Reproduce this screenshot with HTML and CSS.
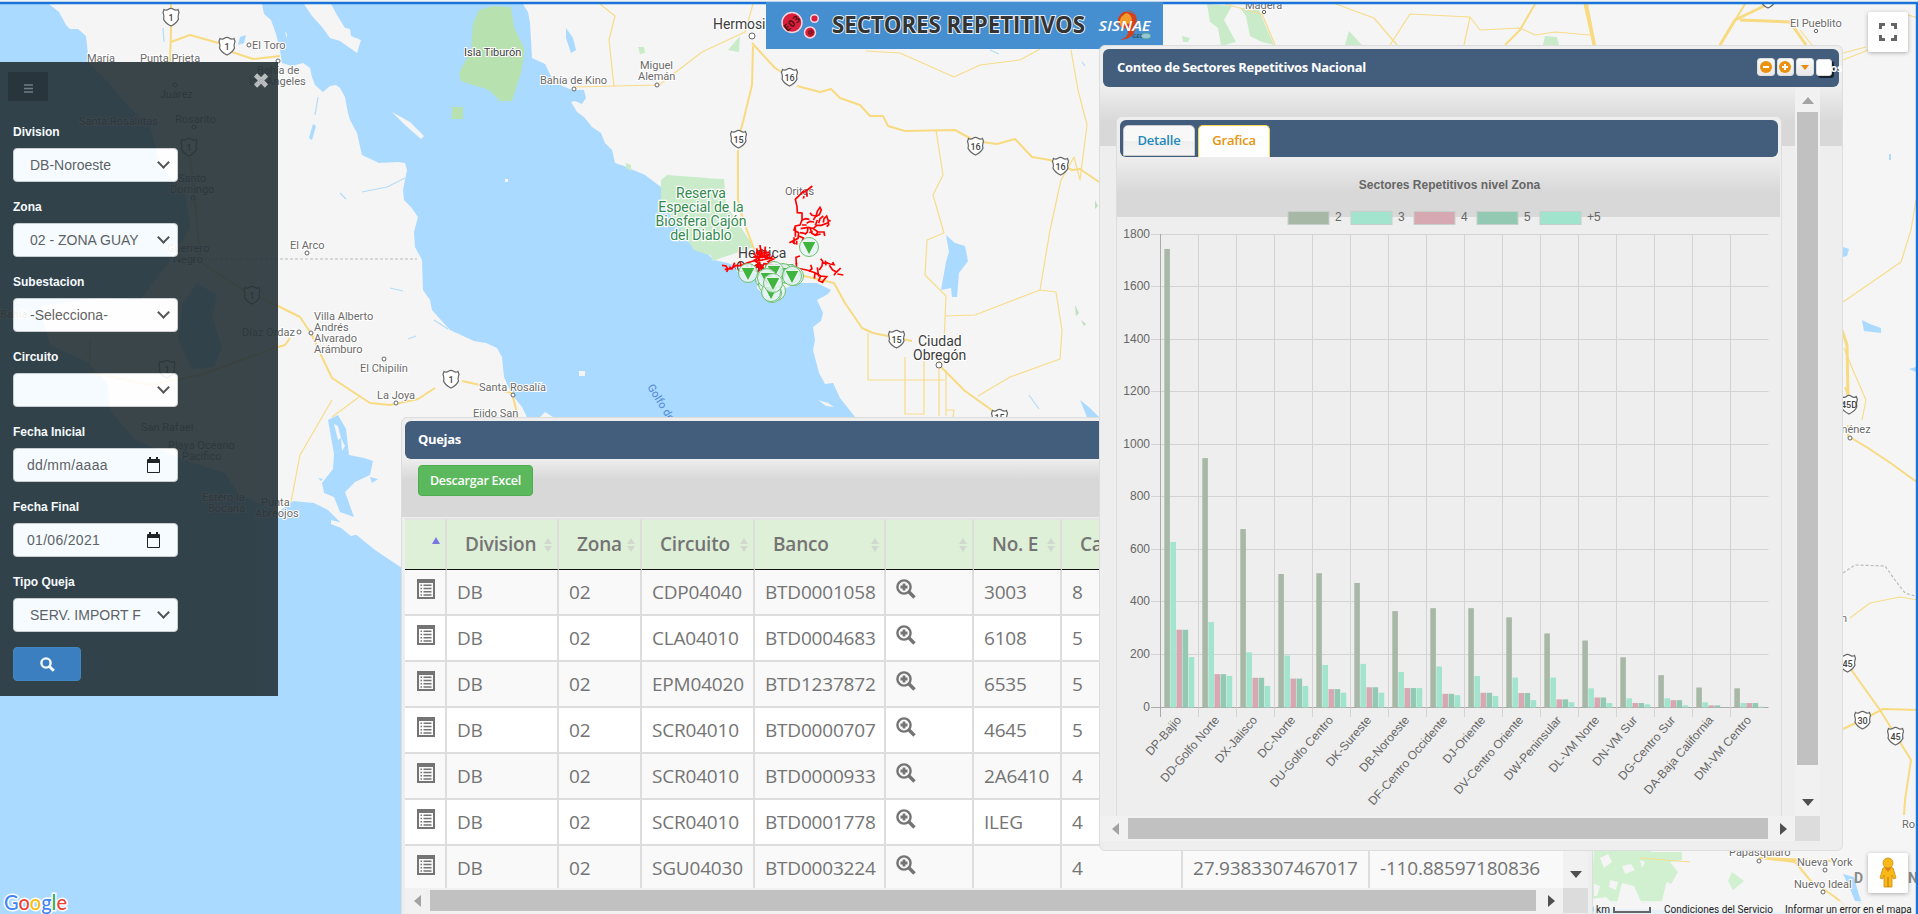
FILE: index.html
```html
<!DOCTYPE html>
<html lang="es">
<head>
<meta charset="utf-8">
<title>Sectores Repetitivos</title>
<link rel="stylesheet" href="styles.css">
</head>
<body>
<svg class="defs" width="0" height="0" aria-hidden="true">
  <symbol id="i-list" viewBox="0 0 18 20"><path fill="currentColor" fill-rule="evenodd" d="M0 0h18v20H0zM2 4v14h14V4zM3.500 5.500h1.500v1.500H3.500zM6.500 5.500h8v1.500h-8zM3.500 8.700h1.500v1.500H3.500zM6.500 8.700h8v1.500h-8zM3.500 12h1.500v1.500H3.500zM6.500 12h8v1.500h-8zM3.500 15.200h1.500v1.500H3.500zM6.500 15.200h8v1.500h-8z"/></symbol>
  <symbol id="i-zoom" viewBox="0 0 20 20"><g fill="none" stroke="currentColor"><circle cx="8" cy="8" r="6.600" stroke-width="2.400"/><path d="M8 4.500v7M4.500 8h7" stroke-width="2.800"/><path d="M12.800 12.800L18.500 18.500" stroke-width="3.400"/></g></symbol>
  <symbol id="shield" viewBox="0 0 18 20"><path d="M2 2.500Q4.500 4 6.500 2.300Q9 .5 11.500 2.300Q13.500 4 16 2.500L17 5.500Q15.500 9 16.500 12Q15 16 9 19Q3 16 1.500 12Q2.500 9 1 5.500Z" fill="#fff" stroke="#666" stroke-width="1.200"/></symbol>
</svg>

<main class="screen">
  <svg class="map" viewBox="0 0 1918 914" width="1918" height="914">
    <rect width="1918" height="914" fill="#aadaff"/>
    <g fill="#f5f5f5">
      <path d="M49 4L59 12L66 25L70 29L78 29L86 36L88 55L88 62L108 82L130 108L150 125L160 165L186 195L190 228L172 258L152 285L140 300L100 298L40 306L50 345L88 362L108 385L110 410L135 440L190 462L225 473L240 495L278 512L293 501L314 503L328 510L341 523L354 533L375 550L402 568L470 620L700 640L600 520L527 417L522 407L514 397L508 386L504 377L502 357L497 348L486 343L474 341L450 330L440 319L432 310L430 300L423 290L422 260L415 247L414 232L418 217L411 207L404 200L403 190L407 170L405 163L398 162L379 163L362 155L357 133L350 120L348 113L345 97L340 88L336 85L330 86L323 92L315 85L312 77L310 68L303 63L292 66L282 63L280 50L276 34L271 20L264 14L262 4Z"/>
      <path d="M304 4L312 16L322 27L330 38L340 41L357 53L361 40L351 36L350 29L345 28L337 15L331 4ZM392 112L410 122L424 136L421 139L405 125ZM523 4L528 12L530 23L531 40L532 58L545 64L552 78L560 85L572 90L584 90L586 98L582 104L575 101L571 102L577 112L584 117L592 127L601 133L605 143L612 150L615 163L624 166L645 175L661 187L661 200L670 215L679 227L697 244L714 260L728 263L742 270L754 271L758 277L757 288L762 293L775 300L781 297L786 288L797 283L817 283L831 290L828 294L817 300L823 313L821 321L813 327L815 340L813 350L819 373L825 384L833 383L840 398L855 417L900 520L1100 900L1918 914V4Z"/>
      <path d="M540 417l5-5 8 5zM579 371h6v5h-6zM818 400l10 3 6 4-8-1zM285 31l2 3v5zM505 179h3v3h-3z"/>
    </g>
    <path fill="#aadaff" d="M182 305l15-22 20 12-5 22 10 30-8 20-22 2-14-30zM328 420l10-5 8 14 3 26 15 3 9 3-3 14-15 7-10 10 9 25-14-5-6-15-10-4-2-10 11-14 1-15zM370 477l8 2-6 4zM318 478l5 1-2 2zM313 124l3 2-4 14-3-2zM566 28l7 10 3 12-5 3-5-15zM946 235l9 8 10 3 3 15-9 12-2 24-5 0-1-9-10 2 5-28 3-10zM240 37l6-2-2 8-6 2zM1080 400l10 8 9 9h-12z"/>
    <path fill="#f5f5f5" d="M334 424l4 2 3 12-3 2zM341 438l4 8-3 5zM331 520l16 4 12 10-8 2-10-8-10-4z"/>
    <path fill="#b7e2b0" d="M479 10L493 6L511 7L514 27L525 50L521 73L512 101L500 101L489 90L461 81L459 73L471 50L473 23ZM452 107h11v12h-11z"/>
    <path fill="#c9ebc9" d="M661 180L667 175L708 178L709 205L735 247L718 258L694 250L679 227L661 200ZM708 178h0zM728 50l12-14-1 16zM638 47l6 0 1 6-5 1zM1207 4l25 2-8 14 12 22-15 4-3-18-8-6zM1240 8l18-1 8 20 8 18-12-3-12-6-4-20zM1349 31l13 14h-17zM1545 36l12 1 2 8h-16zM626 163l5 2 0 6-5-3zM1182 36l8 2-2 4-5 0z"/>
    <path fill="#c9ebc9" d="M700 178L724 179L726 205L754 247L712 261Z"/>
    <path fill="#c9efc9" opacity=".85" d="M1594 850h55l12 8-10 13 16 8-5 22-20 3-8-18-12-3-6 24-10-10-15 2zM1652 852l30 0 0 8-12 2 8 10-7 12-12-6-10 8 2-18zM1732 872l12 9-11 9-5-9z"/>
    <path fill="#f5f5f5" d="M1600 858l8-4 4 8-8 6zM1622 866l9-2 4 6-10 4zM1610 880l8 2-2 8-7-3zM1640 860l5 2-3 6zM1594 884l6 2-3 10h-3z"/>
    <path fill="#aadaff" d="M1843 247l6 2-2 7-4 1zM1862 320l8 4 11 4 0 5-17-2zM1909 369l7-2v5zM1843 874l11 3 5 18 4 10-8-4-5-12zM1889 154h2v6h-2z"/>
    <g class="road thin">
      <path d="M600 4L615 16L609 40L614 87M574 87L659 85L702 52L745 32L753 4M866 51L900 53L954 77L980 65L1020 60L1040 49M1071 50L1078 90L1087 125L1080 180L1074 157L1061 180L1050 230L1040 290L975 315L945 316M936 130L943 175L933 195L944 233L927 240L925 275L946 296L944 343M868 333V380H945M905 357V414H924V357H960M939 360V416M946 370V416M946 410H954L953 417M1040 290L1056 292L1062 330L1060 359L1010 377L978 396M332 400L300 455L291 502M359 397L332 417"/>
      <path d="M1225 4L1262 14L1275 45M1336 4L1374 18L1397 45M1410 14L1390 45M1410 14L1470 17L1480 30L1520 28L1535 35L1555 32L1590 35M1470 17L1464 45M1843 53L1866 47M1838 62L1868 50M1918 18L1908 15M1843 302L1901 262L1911 230L1916 200M1844 348L1853 370L1866 400L1862 420M1850 618L1870 603L1900 597L1918 600M1640 858L1690 862M1800 30L1812 45"/>
    </g>
    <g class="road mid">
      <path d="M171 4V30L170 62M171 42L190 35L222 44M232 52L253 59L280 56M189 150L197 220L200 262L240 288L278 306L300 317L312 335L321 355L332 378L370 403L390 405L418 399L435 388M90 340V372L150 385L200 375L278 347M462 381L480 385L512 393L518 417M278 347L285 345L290 338M738 150V200L743 220L762 270L800 275L834 283L845 303L862 328L873 333L912 341M752 43L775 68L789 77M797 86L820 92L831 89L840 98L860 105L870 116L883 116L888 126L905 131L955 130L975 141L997 144L1015 139L1032 157L1050 160L1072 170L1080 169L1099 182M753 46L752 85L743 122L738 140M940 366L965 391L1000 416M1845 387L1848 395M1848 425V436L1868 448L1892 464L1918 483M1850 668L1880 710L1911 760L1905 800L1904 815M1843 729L1862 720L1883 709L1918 710M1587 4L1595 45M1535 4L1520 30L1505 45M1745 4L1720 45M1838 861L1760 858L1795 862L1810 880L1835 897L1850 910"/>
    </g>
    <g class="road wide"><path d="M1585 4L1594 45M1764 6L1735 20L1720 45M1740 20L1790 22L1806 45M1842 330L1847 345L1848 396"/></g>
    <path d="M200 259H417M1843 573L1855 565L1885 566L1895 580L1905 593L1918 597" fill="none" stroke="#bbb" stroke-width="1.200" stroke-dasharray="3 2"/>
    <g fill="none" stroke="#b4dcf8" stroke-width="1.200"><path d="M340 193l6 6M362 192l25-5 18-9M390 288l13 3M408 339l8-3M434 320l14 9M163 28l1 14M318 97l-3 18M1029 395l10 14M1082 62l3 4M990 50l9 4"/></g>
    <g fill="#bfe0bf"><path d="M1075 305l4 8-3 3zM1081 320l5 4-2 2zM1095 200l3 6-3 3z"/></g>

    <g class="shields">
      <use href="#shield" x="162" y="7" width="18" height="20"/><text x="171" y="21">1</text>
      <use href="#shield" x="218" y="36" width="18" height="20"/><text x="227" y="50">1</text>
      <use href="#shield" x="442" y="369" width="18" height="20"/><text x="451" y="383">1</text>
      <use href="#shield" x="180" y="137" width="18" height="20"/><text x="189" y="151">1</text>
      <use href="#shield" x="243" y="285" width="18" height="20"/><text x="252" y="299">1</text>
      <use href="#shield" x="158" y="359" width="18" height="20"/><text x="167" y="373">1</text>
      <use href="#shield" x="780" y="67" width="19" height="20"/><text x="789.500" y="81">16</text>
      <use href="#shield" x="966" y="136" width="19" height="20"/><text x="975.500" y="150">16</text>
      <use href="#shield" x="1051" y="156" width="19" height="20"/><text x="1060.500" y="170">16</text>
      <use href="#shield" x="729" y="129" width="19" height="20"/><text x="738.500" y="143">15</text>
      <use href="#shield" x="887" y="329" width="19" height="20"/><text x="896.500" y="343">15</text>
      <use href="#shield" x="990" y="408" width="19" height="20"/><text x="999.500" y="421">15</text>
      <use href="#shield" x="1837" y="394" width="24" height="21"/><text x="1849" y="408">45D</text>
      <use href="#shield" x="1838" y="653" width="19" height="20"/><text x="1847.500" y="667">45</text>
      <use href="#shield" x="1853" y="710" width="19" height="20"/><text x="1862.500" y="724">30</text>
      <use href="#shield" x="1886" y="726" width="19" height="20"/><text x="1895.500" y="740">45</text>
      <use href="#shield" x="1759" y="-11" width="18" height="20"/>
    </g>
    <g class="dots">
      <circle cx="249" cy="45" r="2"/><circle cx="278" cy="61" r="2"/><circle cx="307" cy="253" r="2"/><circle cx="299" cy="332" r="2"/><circle cx="311" cy="333" r="2"/><circle cx="384" cy="359" r="2"/><circle cx="396" cy="403" r="2"/><circle cx="513" cy="395" r="2"/><circle cx="574" cy="89" r="2"/><circle cx="657" cy="85" r="2"/><circle cx="752" cy="36" r="3"/><circle cx="939" cy="365" r="3"/><circle cx="1264" cy="12" r="1.700"/><circle cx="1816" cy="31" r="1.700"/><circle cx="1850" cy="438" r="2"/><circle cx="1759" cy="861" r="2"/><circle cx="1825" cy="870" r="2"/><circle cx="1823" cy="892" r="2"/>
      <circle cx="175" cy="85" r="2"/><circle cx="194" cy="127" r="2"/><circle cx="193" cy="198" r="2"/><circle cx="738" cy="267" r="3"/>
    </g>
    <g class="place">
      <text x="87" y="62">María</text><text x="140" y="62">Punta Prieta</text><text x="252" y="49">El Toro</text>
      <text x="257" y="74">Bahía de</text><text x="249" y="85">los Ángeles</text><text x="160" y="98">Juárez</text>
      <text x="79" y="125">Santa Rosaliitas</text><text x="175" y="123">Rosarito</text><text x="178" y="182">Santo</text><text x="170" y="193">Domingo</text>
      <text x="167" y="252">Guerrero</text><text x="173" y="263">Negro</text><text x="0" y="318">Bahía</text>
      <text x="290" y="249">El Arco</text><text x="242" y="336">Díaz Ordaz</text>
      <text x="314" y="320">Villa Alberto</text><text x="314" y="331">Andrés</text><text x="314" y="342">Alvarado</text><text x="314" y="353">Arámburo</text>
      <text x="360" y="372">El Chipilín</text><text x="377" y="399">La Joya</text><text x="479" y="391">Santa Rosalía</text><text x="473" y="417">Ejido San</text>
      <text x="141" y="431">San Rafael</text><text x="168" y="449">Playa Océano</text><text x="182" y="460">Pacífico</text>
      <text x="202" y="501">Estero la</text><text x="208" y="512">Bocana</text><text x="261" y="506">Punta</text><text x="255" y="517">Abreojos</text>
      <text x="540" y="84">Bahía de Kino</text><text x="640" y="69">Miguel</text><text x="638" y="80">Alemán</text><text x="785" y="195">Oritas</text>
      <text x="1245" y="9">Madera</text><text x="1790" y="27">El Pueblito</text><text x="1829" y="433">Jiménez</text><text x="1841" y="622">n</text>
      <text x="1902" y="828">Ro</text><text x="1729" y="856">Papasquiaro</text><text x="1797" y="866">Nueva York</text><text x="1794" y="888">Nuevo Ideal</text>
    </g>
    <g class="place city"><text x="464" y="56" class="isla">Isla Tiburón</text><text x="713" y="29" textLength="67">Hermosillo</text><text x="918" y="346">Ciudad</text><text x="913" y="360">Obregón</text><text x="738" y="258">Heroica</text><text x="736" y="272">Guaymas</text></g>
    <g class="park"><text x="701" y="198">Reserva</text><text x="701" y="212">Especial de la</text><text x="701" y="226">Biosfera Cajón</text><text x="701" y="240">del Diablo</text></g>
    <text class="sea" transform="translate(647 387) rotate(58)">Golfo de California</text>
    <g fill="#8a8a8a" font-family="Roboto, sans-serif" font-weight="700" font-size="14"><text x="1854" y="883">D</text><text x="1908" y="883">N</text></g>

    <!-- circuit network around Guaymas -->
    <g class="net" transform="translate(700 170) scale(.33333)">
      <path d="M337 48L322 60L304 70L286 88L291 110L292 128L306 129V150L300 165L286 168L282 180L296 188L294 205L268 218M304 70l8-8M318 66l4 14M312 78l-2 8M306 150l12-4 10 2M306 165l14 0M302 176l22-4 16 4 10-10 14 0 20-8M340 176l14 10 18 0 2 12M354 186l-8 10M340 150l8-12 4-14 8-12 4 8-6 14-12 6M348 138l-12-2-6-8M356 160l4-14 10-8M370 158l2-12 8-8 4 12 8 4M384 150l2 14-6 6M324 172l-2 14-8 8M330 174l6 16 10 6 16-4M300 188l14 2M296 198l14 6-4 10 10 6M290 212v12M282 202v20M276 214l10 8M286 172v28M338 184l-10 4M320 160l10-6 12 2M346 166l6-16"/>
      <path d="M290 300L288 262L300 258M286 282l6-2M290 294L320 300L345 308L362 318L380 320L365 338M332 284l4 12-10 8M345 308l-2 18M358 300l8-12 2-14-6-8M366 280l14-2 10 4 12 2-4-8M376 272l2 14M388 286l10 14 12 6 8-8 4-4M408 306l-6 10M412 312l18 3M362 318l-6 14 14 6M352 292l4 28"/>
      <path d="M66 286l12 2 6 10-4 8M74 298l20-2 14-10 14 2 20-10 16-4 12-8M104 278l-6 14M120 276l6 18M88 290l10 8M160 250l14 14-10 8 14 10-10 12M170 235l4 16 12-14-4 18 16-14-8 20 20-10-12 14 22 2-16 8 10 8-22-2-6 12-8-14-12 10M180 225l2 16M196 230l-2 20 14-4M160 262l24-4 30 6 4-8M166 274l40-8M176 262l8 40 6-12M176 288v24"/>
      <path stroke-width="9" d="M168 246l20 12 14 0M172 262l24-4"/>
    </g>
    <g id="pins"></g>

    <g class="attribution">
      <rect x="1593" y="901" width="325" height="13" fill="#f5f5f5" opacity=".8"/>
      <text x="1588" y="913">0 km</text><text x="1664" y="913">Condiciones del Servicio</text><text x="1785" y="913">Informar un error en el mapa</text>
      <path d="M1614 907v5h36v-5" fill="none" stroke="#666" stroke-width="2"/>
    </g>
    <g class="google"><text x="4" y="910" textLength="63" lengthAdjust="spacingAndGlyphs"><tspan fill="#4285f4">G</tspan><tspan fill="#ea4335">o</tspan><tspan fill="#fbbc05">o</tspan><tspan fill="#4285f4">g</tspan><tspan fill="#34a853">l</tspan><tspan fill="#ea4335">e</tspan></text></g>
    <rect width="1918" height="2" fill="#f1f3f4"/>
    <path d="M0 3H1917V914" fill="none" stroke="#1a73d8" stroke-width="2.400"/>
  </svg>

  <button class="map-btn full"><svg width="18" height="18" viewBox="0 0 18 18"><path d="M1.500 6V1.500H6M12 1.500h4.500V6M16.500 12v4.500H12M6 16.500H1.500V12" fill="none" stroke="#666" stroke-width="3"/></svg></button>
  <button class="map-btn pegman"><svg width="20" height="32" viewBox="0 0 20 32"><path d="M5 11Q10 8 15 11L18 21L15.500 22L14 18V30H6V18L4.500 22L2 21Z" fill="#fbb917" stroke="#c98a10" stroke-width=".8"/><path d="M7 11h6l-3 4z" fill="#e57c1b"/><path d="M10 20v10" stroke="#b9770e"/><circle cx="10" cy="6" r="5" fill="#fbb917" stroke="#c98a10" stroke-width=".8"/></svg></button>

  <svg class="banner" viewBox="766 2 397 47" width="397" height="47">
    <rect x="766" y="2" width="397" height="47" fill="#458fd0"/>
    <g fill="#dc1f3c" stroke="#f3d7e0" stroke-width="1.500"><circle cx="792" cy="22.500" r="10"/><circle cx="814.500" cy="18.500" r="3.800"/><circle cx="810" cy="32.500" r="5.500"/></g>
    <text x="782.500" y="26.500" transform="rotate(-42 792 23)" font-family="Open Sans, sans-serif" font-size="10" font-weight="700" fill="#511" textLength="18">E03</text>
    <text x="807" y="35" transform="rotate(-30 810 32)" font-family="Open Sans, sans-serif" font-size="7" font-weight="700" fill="#511">@</text>
    <text class="brand" x="832" y="33" textLength="253" lengthAdjust="spacingAndGlyphs">SECTORES REPETITIVOS</text>
    <path d="M1134 14Q1122 7 1118 19Q1117 26 1124 28Q1131 30 1126 37L1120 40Q1134 39 1135 29Q1138 22 1136 16Q1133 10 1126 10Q1133 12 1134 14Z" fill="#d2401c"/>
    <path d="M1127 13Q1134 16 1131 24Q1124 22 1121 27Q1117 17 1127 13Z" fill="#f39a2c"/>
    <text x="1098.500" y="30.500" font-family="Open Sans, sans-serif" font-size="15" font-style="italic" font-weight="600" fill="#fff" textLength="52" lengthAdjust="spacingAndGlyphs">SISNAE</text>
    <text x="1132" y="38" font-family="Open Sans, sans-serif" font-size="6" font-style="italic" font-weight="700" fill="#31566f">GEO</text><ellipse cx="1146" cy="36" rx="4.500" ry="2.500" fill="#9cc7d8" stroke="#6b8" stroke-width=".8"/>
  </svg>

  <aside class="sidebar">
    <div class="side-top">
      <button class="menu"><svg width="9" height="9" viewBox="0 0 9 9"><path d="M0 1h9M0 4.500h9M0 8h9" stroke="#6c7478" stroke-width="1.400"/></svg></button>
      <svg class="close" width="16" height="15" viewBox="0 0 16 15"><path d="M2.500 2l11 11M13.500 2l-11 11" stroke="#b3b7b9" stroke-width="4.600"/></svg>
    </div>
    <form class="filters">
      <label>Division<span class="ctl sel">DB-Noroeste</span></label>
      <label>Zona<span class="ctl sel">02 - ZONA GUAY</span></label>
      <label>Subestacion<span class="ctl sel">-Selecciona-</span></label>
      <label>Circuito<span class="ctl sel"></span></label>
      <label>Fecha Inicial<span class="ctl date">dd/mm/aaaa</span></label>
      <label>Fecha Final<span class="ctl date">01/06/2021</span></label>
      <label>Tipo Queja<span class="ctl sel">SERV. IMPORT F</span></label>
      <button type="button" class="search"><svg width="15" height="15" viewBox="0 0 15 15"><circle cx="6" cy="6" r="4.600" fill="none" stroke="#fff" stroke-width="2.400"/><path d="M9.500 9.500L13.800 13.800" stroke="#fff" stroke-width="3"/></svg></button>
    </form>
  </aside>

  <section class="window quejas">
    <header class="bar">Quejas</header>
    <div class="q-tools"><button class="excel">Descargar Excel</button></div>
    <div class="q-view">
      <div class="q-clip">
        <table>
          <colgroup><col class="c42"><col class="c112"><col class="c83"><col class="c113"><col class="c131"><col class="c88"><col class="c88"><col class="c121"><col class="c187"><col class="c193"></colgroup>
          <thead><tr><th class="asc"></th><th>Division</th><th>Zona</th><th>Circuito</th><th>Banco</th><th></th><th>No. E</th><th>Ca</th><th></th><th></th></tr></thead>
          <tbody id="rows"></tbody>
        </table>
      </div>
      <div class="vbar"><i class="ar down"></i></div>
      <div class="hbar"><i class="ar left"></i><span class="thumb"></span><i class="ar right"></i></div>
      <div class="corner"></div>
    </div>
  </section>

  <section class="window conteo">
    <header class="bar">Conteo de Sectores Repetitivos Nacional
      <span class="tools">
        <b><svg width="12" height="12"><circle cx="6" cy="6" r="6" fill="#ea9210"/><path d="M3 6h6" stroke="#fff" stroke-width="2"/></svg></b>
        <b><svg width="12" height="12"><circle cx="6" cy="6" r="6" fill="#ea9210"/><path d="M3 6h6M6 3v6" stroke="#fff" stroke-width="2"/></svg></b>
        <b><svg width="12" height="12"><path d="M2 4h8l-4 5z" fill="#ea8a10"/></svg></b>
        <b class="x"></b><em>os</em>
      </span>
    </header>
    <div class="c-body">
      <div class="c-clip">
        <div class="inner">
          <nav class="bar tabs"><a class="tab">Detalle</a><a class="tab on">Grafica</a></nav>
          <svg class="chart" id="chart" viewBox="1117 157 663 660" width="663" height="660"></svg>
        </div>
      </div>
      <div class="vbar"><i class="ar up"></i><span class="thumb"></span><i class="ar down"></i></div>
      <div class="hbar"><i class="ar left"></i><span class="thumb"></span><i class="ar right"></i></div>
      <div class="corner"></div>
    </div>
  </section>
</main>
<script src="script.js"></script>
</body>
</html>
```
FILE: styles.css
```css
*, *::before, *::after { box-sizing: border-box; }
body { margin: 0; overflow: hidden; font-family: "Liberation Sans", Arial, sans-serif; }
button { border: 0; padding: 0; font: inherit; }
.defs { position: absolute; }
.screen { position: relative; width: 1918px; height: 914px; overflow: hidden; }
.map { display: block; }

.road { fill: none; stroke: #f7dc8a; stroke-linejoin: round; }
.thin { stroke-width: 1.2; }
.mid { stroke-width: 2; stroke: #f8da80; }
.wide { stroke-width: 3; stroke: #f8da80; }
.shields text { font: 500 9px Roboto, sans-serif; fill: #444; text-anchor: middle; }
.dots circle { fill: #fff; stroke: #666; stroke-width: 1; }
.place text { font: 11px Roboto, sans-serif; fill: #6a6a6a; stroke: #fff; stroke-width: 2px; paint-order: stroke; }
.place.city text { font-size: 14px; fill: #3c3c3c; }
.place.city .isla { font-size: 11px; }
.park text { font: 14px Roboto, sans-serif; fill: #338a4f; text-anchor: middle; stroke: #fff; stroke-width: 2.5px; paint-order: stroke; }
.sea { font: 11px Roboto, sans-serif; fill: #4f86d8; }
.net { fill: none; stroke: #f00; stroke-width: 5; }
.attribution text { font: 10px Roboto, sans-serif; fill: #222; }
.google text { font: 500 21px Lato, sans-serif; stroke: #fff; stroke-width: 3px; paint-order: stroke; }

.map-btn { position: absolute; left: 1868px; width: 40px; height: 40px; background: #fff; border-radius: 2px; box-shadow: 0 1px 4px rgba(0,0,0,.3); display: flex; align-items: center; justify-content: center; }
.full { top: 12px; }
.pegman { top: 853px; }
.banner { position: absolute; left: 766px; top: 2px; }
.brand { font: 700 23px "Open Sans", sans-serif; fill: #333; stroke: #e6eef6; stroke-width: 2px; paint-order: stroke; }

.sidebar { position: absolute; left: 0; top: 62px; width: 278px; height: 634px; background: #263238; opacity: .9; }
.side-top { display: flex; justify-content: space-between; padding: 10px 9px 0 8px; height: 60px; }
.menu { width: 40px; height: 29px; background: #1b2429; display: flex; align-items: center; justify-content: center; padding-top: 3px; }
.close { margin-top: 1px; }
.filters { display: flex; flex-direction: column; padding-left: 13px; align-items: flex-start; }
.filters label { height: 75px; font-weight: 700; font-size: 12px; line-height: 20px; color: #fff; }
.ctl { display: flex; align-items: center; position: relative; width: 165px; height: 34px; margin-top: 6px; background: #fff; border: 1px solid #ccc; border-radius: 4px; color: #555; font-size: 14px; font-weight: 400; padding-left: 16px; }
.sel::after { content: ""; position: absolute; right: 9px; top: 9px; width: 9px; height: 9px; border: solid #444; border-width: 0 2px 2px 0; transform: rotate(45deg); }
.date { padding-left: 13px; letter-spacing: .3px; }
.date::after { content: ""; position: absolute; left: 133px; top: 10px; width: 13px; height: 14px; border: 1.5px solid #111; border-top-width: 4px; border-radius: 1px; }
.date::before { content: ""; position: absolute; left: 135px; top: 8px; width: 9px; height: 3px; border: solid #111; border-width: 0 2px; }
.search { width: 68px; height: 34px; border-radius: 4px; background: #2f76ba; border: 1px solid #357ebd; display: flex; align-items: center; justify-content: center; }

.window { position: absolute; border: 1px solid #ddd; border-radius: 6px; padding: 3px; background: #eee; color: #333; }
.bar { display: flex; align-items: center; height: 38px; padding-left: 13px; border-radius: 6px; background: #435d7d; color: #fff; font: 700 13px/1 "Open Sans", sans-serif; letter-spacing: -.33px; }
.conteo > .bar, .quejas > .bar { padding-bottom: 2px; }
.quejas { left: 401px; top: 417px; width: 1192px; height: 510px; }
.q-tools { height: 59px; margin: 0 -3px; padding: 6px 16px; background: linear-gradient(#eee, #d8d8d8 35%, #d8d8d8); border-bottom: 1px solid #eee; }
.excel { width: 115px; height: 31px; border: 1px solid #4cae4c; border-radius: 4px; background: #5cb85c; color: #fff; font: 600 12.5px "Open Sans", sans-serif; letter-spacing: -.25px; }
.q-view { display: grid; grid-template-columns: 1158px 25px; grid-template-rows: 370px 25px; }
.q-clip { overflow: hidden; }
table { table-layout: fixed; width: 1158px; border-collapse: separate; border-spacing: 0; font-family: "Open Sans", sans-serif; color: #747474; }
.c42 { width: 42px; } .c112 { width: 112px; } .c83 { width: 83px; } .c113 { width: 113px; } .c131 { width: 131px; }
.c88 { width: 88px; } .c121 { width: 121px; } .c187 { width: 187px; } .c193 { width: 193px; }
th { position: relative; height: 52px; padding: 0 0 2px 18px; text-align: left; font-size: 19px; font-weight: 600; letter-spacing: -.2px; background: #dff0d8; border-right: 2px solid #ddd; border-bottom: 1px solid #111; border-top: 2px solid #e4e4e4; }
th::before, th::after { content: ""; position: absolute; right: 5px; border: solid transparent; border-width: 0 4px; }
th::before { top: 18px; border-bottom: 6px solid #d0d8d0; }
th::after { top: 26px; border-top: 6px solid #d0d8d0; }
th.asc::before { top: 17px; border-bottom: 7px solid #7878e0; }
th.asc::after { display: none; }
td { height: 46px; padding: 0 0 0 10px; font-size: 19px; letter-spacing: -.2px; white-space: nowrap; border-right: 2px solid #ddd; border-bottom: 2px solid #ddd; background: #fff; }
tr:nth-child(odd) td { background: #f9f9f9; }
td:last-child, th:last-child { border-right: 0; }
td svg { display: block; margin-top: -6px; }
td:first-child { padding-left: 12px; }
td:nth-child(6) { padding-left: 10px; }

.vbar { background: #f1f1f1; display: flex; flex-direction: column; align-items: center; }
.hbar { background: #f1f1f1; display: flex; align-items: center; }
.corner { background: #dcdcdc; }
.thumb { background: #c1c1c1; flex: none; }
.ar { width: 0; height: 0; border: 6px solid transparent; flex: none; }
.up { border-bottom: 7px solid #a3a3a3; border-top: 0; }
.down { border-top: 7px solid #505050; border-bottom: 0; }
.left { border-right: 7px solid #a3a3a3; border-left: 0; }
.right { border-left: 7px solid #505050; border-right: 0; }
.quejas .vbar { justify-content: flex-end; padding-bottom: 10px; }
.quejas .hbar { padding: 0 9px; }
.quejas .hbar .thumb { width: 1106px; height: 21px; margin: 0 12px 0 9px; }

.conteo { left: 1099px; top: 45px; width: 744px; height: 806px; }
.conteo > .bar { position: relative; padding-left: 14px; }
.tools { display: flex; gap: 2px; position: absolute; left: 654px; top: 9px; width: 92px; height: 22px; }
.tools b { width: 17.5px; height: 18px; flex: none; border-radius: 3px; background: linear-gradient(#fafafa, #e8e8e8); border: 1px solid #ddd; display: flex; align-items: center; justify-content: center; }
.tools .x { position: relative; z-index: 1; background: #fff; width: 16px; height: 17px; margin: 1px 0 0; box-shadow: 2px 2px 0 #16222e; }
.tools em { position: relative; z-index: 2; font: 700 11px/16px "Open Sans", sans-serif; margin: 2px 0 0 -3px; }
.c-body { display: grid; grid-template-columns: 695px 25px; grid-template-rows: 729px 25px; margin: 0 -3px; background: linear-gradient(#eee, #d8d8d8 35px, #d8d8d8 59px, #eee 59px); }
.c-clip { overflow: hidden; padding: 29px 0 0 16px; }
.inner { width: 666px; height: 800px; border: 1px solid #ddd; border-radius: 6px; padding: 3px; background: #eee; }
.tabs { height: 37px; padding: 5px 0 0 3px; gap: 3px; align-items: stretch; }
.tab { width: 72px; display: flex; align-items: center; justify-content: center; border: 1px solid #ccc; border-radius: 5px 5px 0 0; margin-bottom: 1px; background: linear-gradient(#f8f8f8 50%, #eee 50%, #f5f5f5); color: #1f87bb; font-weight: 600; letter-spacing: -.2px; padding-bottom: 1px; }
.tab.on { background: #fff; border-color: #fbd850; border-bottom: 0; color: #e8930c; margin-bottom: 0; padding-bottom: 2px; }
.chart { display: block; margin: 0 -3px; background: linear-gradient(#eee, #d8d8d8 35px, #d8d8d8 60px, #eee 60px); }
.chart text { font: 12px "Liberation Sans", Arial, sans-serif; fill: #666; }
.chart .title { font-weight: 700; }
.conteo .vbar { padding: 10px 0; }
.conteo .vbar .thumb { width: 21px; height: 653px; margin: 8px 0 auto; }
.conteo .hbar .thumb { width: 640px; height: 21px; margin: 0 12px 0 9px; }
.conteo .hbar { padding-left: 12px; }
```
FILE: script.js
```js
const icon = (id, w, h) => `<svg width="${w}" height="${h}"><use href="#${id}"/></svg>`;

const complaints = [
  ['CDP04040', 'BTD0001058', '3003', '8', '', ''],
  ['CLA04010', 'BTD0004683', '6108', '5', '', ''],
  ['EPM04020', 'BTD1237872', '6535', '5', '', ''],
  ['SCR04010', 'BTD0000707', '4645', '5', '', ''],
  ['SCR04010', 'BTD0000933', '2A6410', '4', '', ''],
  ['SCR04010', 'BTD0001778', 'ILEG', '4', '', ''],
  ['SGU04030', 'BTD0003224', '', '4', '27.9383307467017', '-110.88597180836'],
];
document.getElementById('rows').innerHTML = complaints.map(([circ, bank, no, n, lat, lng]) =>
  '<tr>' + [icon('i-list', 18, 20), 'DB', '02', circ, bank, icon('i-zoom', 20, 20), no, n, lat, lng]
    .map(v => `<td>${v}</td>`).join('') + '</tr>').join('');

const pins = [[794, 276], [787, 274], [790, 274], [783, 273], [774, 271], [765, 279], [768, 284], [776, 291], [772, 293], [767, 278], [748, 273], [792, 276], [771, 292], [809, 247], [773, 283]];
document.getElementById('pins').innerHTML = pins.map(([x, y]) =>
  `<g transform="translate(${x} ${y})"><circle r="9.500" fill="#e8f2f8" fill-opacity=".85" stroke="#6fc16f"/><path d="M-7 -5.500H7L0 8Z" fill="#3fb53f" stroke="#fff" stroke-width=".8"/></g>`).join('');

const series = [['2', '#a8b8a6'], ['3', '#a3e4cf'], ['4', '#d6a8b1'], ['5', '#93c8b3'], ['+5', '#a0e4cd']];
const zones = [
  ['DP-Bajio', 1745, 630, 296, 296, 192],
  ['DD-Golfo Norte', 949, 325, 127, 127, 120],
  ['DX-Jalisco', 679, 210, 113, 113, 82],
  ['DC-Norte', 508, 198, 110, 110, 82],
  ['DU-Golfo Centro', 511, 162, 70, 70, 56],
  ['DK-Sureste', 474, 166, 77, 77, 56],
  ['DB-Noroeste', 367, 135, 74, 74, 74],
  ['DF-Centro Occidente', 378, 156, 52, 52, 47],
  ['DJ-Oriente', 378, 120, 56, 56, 44],
  ['DV-Centro Oriente', 343, 114, 55, 55, 28],
  ['DW-Peninsular', 282, 114, 31, 31, 20],
  ['DL-VM Norte', 255, 73, 38, 38, 17],
  ['DN-VM Sur', 191, 35, 17, 17, 12],
  ['DG-Centro Sur', 123, 35, 28, 28, 8],
  ['DA-Baja California', 76, 20, 8, 8, 0],
  ['DM-VM Centro', 73, 17, 17, 17, 3],
];
const X0 = 1160.5, Y0 = 707.5, STEP = 38, H = 473;
const y = v => Y0 - v / 1800 * H;
let s = '<text class="title" x="1449.500" y="189" text-anchor="middle">Sectores Repetitivos nivel Zona</text>';
series.forEach(([name, color], i) => {
  const x = 1288 + 63 * i;
  s += `<rect x="${x}" y="211.500" width="41" height="13" fill="${color}" stroke="#c6cfca"/><text x="${x + 47}" y="221">${name}</text>`;
});
for (let v = 0; v <= 1800; v += 200) {
  const gy = Math.round(y(v)) - .5;
  s += `<path d="M1151 ${gy}H1768.500" stroke="${v ? '#d3d3d3' : '#aaa'}"/><text x="1150" y="${gy + 3}" text-anchor="end">${v}</text>`;
}
zones.forEach(([name, ...vals], i) => {
  const x = X0 + i * STEP;
  s += `<path d="M${x} 234V717" stroke="${i ? '#d3d3d3' : '#aaa'}"/>`;
  vals.forEach((v, k) => {
    s += `<rect x="${x + 3.800 + k * 6.080}" y="${y(v)}" width="5.600" height="${Y0 - y(v)}" fill="${series[k][1]}"/>`;
  });
  s += `<text text-anchor="end" transform="translate(${x + 21.500} 720.500) rotate(-49)">${name}</text>`;
});
document.getElementById('chart').innerHTML = s;
```
